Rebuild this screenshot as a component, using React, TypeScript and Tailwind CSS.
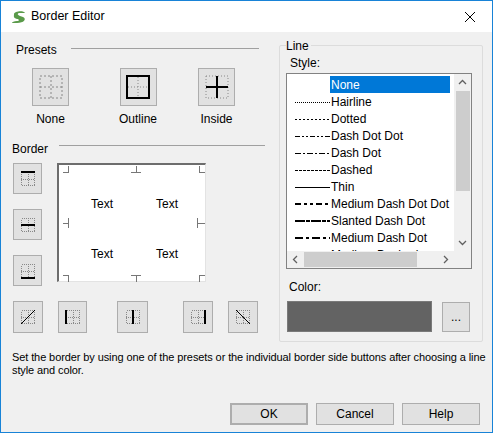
const styles = [
  { label: "None", dash: null as string | null, w: 0 },
  { label: "Hairline", dash: "1 1", w: 1 },
  { label: "Dotted", dash: "2 2", w: 1 },
  { label: "Dash Dot Dot", dash: "5 2 2 2 2 2", w: 1 },
  { label: "Dash Dot", dash: "6 2 2 2", w: 1 },
  { label: "Dashed", dash: "3 1", w: 1 },
  { label: "Thin", dash: "", w: 1 },
  { label: "Medium Dash Dot Dot", dash: "6 3 3 3 3 3", w: 2 },
  { label: "Slanted Dash Dot", dash: "10 1 4 1", w: 2 },
  { label: "Medium Dash Dot", dash: "8 3 3 3", w: 2 },
  { label: "Medium Dashed", dash: "5 3", w: 2 },
]

function Btn({ children, className = "" }: { children?: React.ReactNode; className?: string }) {
  return (
    <div className={"flex items-center justify-center bg-[#e1e1e1] border border-[#adadad] " + className}>
      {children}
    </div>
  )
}

function Grid({ lines }: { lines: string[] }) {
  return (
    <svg width="16" height="16" viewBox="0 0 16 16" shapeRendering="crispEdges">
      <rect x="1.5" y="1.5" width="13" height="13" fill="none" stroke="#888" strokeDasharray="1 1" />
      <line x1="8" y1="1" x2="8" y2="15" stroke="#888" strokeDasharray="1 1" />
      <line x1="1" y1="8" x2="15" y2="8" stroke="#888" strokeDasharray="1 1" />
      {lines.includes("t") && <line x1="1" y1="1" x2="15" y2="1" stroke="#000" strokeWidth="1.2" />}
      {lines.includes("b") && <line x1="1" y1="15" x2="15" y2="15" stroke="#000" strokeWidth="1.2" />}
      {lines.includes("h") && <line x1="1" y1="8" x2="15" y2="8" stroke="#000" strokeWidth="1.2" />}
      {lines.includes("l") && <line x1="1" y1="1" x2="1" y2="15" stroke="#000" strokeWidth="1.2" />}
      {lines.includes("r") && <line x1="15" y1="1" x2="15" y2="15" stroke="#000" strokeWidth="1.2" />}
      {lines.includes("v") && <line x1="8" y1="1" x2="8" y2="15" stroke="#000" strokeWidth="1.2" />}
      {lines.includes("d") && <line x1="1" y1="15" x2="15" y2="1" stroke="#000" strokeWidth="1" shapeRendering="auto" />}
      {lines.includes("u") && <line x1="1" y1="1" x2="15" y2="15" stroke="#000" strokeWidth="1" shapeRendering="auto" />}
    </svg>
  )
}

export default function App() {
  return (
    <div className="w-[493px] h-[433px] border border-[#1883d7] bg-[#f0f0f0] text-[12px] text-black overflow-hidden" style={{ fontFamily: "'Liberation Sans', Arial, sans-serif" }}>
      {/* Title bar */}
      <div className="h-[31px] bg-white flex items-center pl-[10px] pr-[16px]">
        <svg width="16" height="14" viewBox="0 0 16 14">
          <path d="M3 4 C3 1 13 0 14 3 L9 3 C6 3 6 5 9 6 L12 7 C16 9 13 13 6 13 L1 13 C1 12 3 11 6 11 C9 11 8 9 6 9 C2 8 3 6 3 4Z" fill="#5a9a4a" />
        </svg>
        <span className="ml-[4px] text-[12.5px]">Border Editor</span>
        <svg className="ml-auto" width="12" height="12" viewBox="0 0 12 12">
          <path d="M1 1 L11 11 M11 1 L1 11" stroke="#000" strokeWidth="1" />
        </svg>
      </div>

      <div className="flex">
        {/* left column */}
        <div className="w-[270px] pl-[11px]">
          <div className="flex items-center mt-[10px] h-[16px]">
            <span className="ml-[4px]">Presets</span>
            <div className="ml-[14px] flex-1 border-t border-[#a0a0a0] mt-[-4px] mr-[12px]" />
          </div>
          <div className="flex mt-[10px]">
            {[
              { l: "None", x: "ml-[20px]", icon: <svg width="26" height="26" viewBox="0 0 26 26"><rect x="2" y="2" width="22" height="22" fill="none" stroke="#888" strokeDasharray="2 2" /><line x1="13" y1="2" x2="13" y2="24" stroke="#888" strokeDasharray="2 2" /><line x1="2" y1="13" x2="24" y2="13" stroke="#888" strokeDasharray="2 2" /></svg> },
              { l: "Outline", x: "ml-[50px]", icon: <svg width="26" height="26" viewBox="0 0 26 26"><rect x="2" y="2" width="22" height="22" fill="none" stroke="#000" strokeWidth="2" /><line x1="13" y1="3" x2="13" y2="23" stroke="#888" strokeDasharray="1 2" /><line x1="3" y1="13" x2="23" y2="13" stroke="#888" strokeDasharray="1 2" /></svg> },
              { l: "Inside", x: "ml-[41px]", icon: <svg width="26" height="26" viewBox="0 0 26 26"><rect x="2" y="2" width="22" height="22" fill="none" stroke="#888" strokeDasharray="1 2" /><line x1="13" y1="2" x2="13" y2="24" stroke="#000" strokeWidth="2" /><line x1="2" y1="13" x2="24" y2="13" stroke="#000" strokeWidth="2" /></svg> },
            ].map((p) => (
              <div key={p.l} className={"flex flex-col items-center " + p.x}>
                <Btn className="w-[37px] h-[38px]">{p.icon}</Btn>
                <span className="mt-[4px]">{p.l}</span>
              </div>
            ))}
          </div>

          <div className="flex items-center mt-[13px] h-[16px]">
            <span>Border</span>
            <div className="ml-[11px] flex-1 border-t border-[#a0a0a0] mt-[-8px] mr-[6px]" />
          </div>

          <div className="flex mt-[6px]">
            <div className="flex flex-col gap-[15px] ml-[1px]">
              <Btn className="w-[29px] h-[31px]"><Grid lines={["t"]} /></Btn>
              <Btn className="w-[29px] h-[31px]"><Grid lines={["h"]} /></Btn>
              <Btn className="w-[29px] h-[31px]"><Grid lines={["b"]} /></Btn>
            </div>
            <div className="relative ml-[15px] w-[149px] h-[119px] bg-white border-l-2 border-t-2 border-[#6d6d6d] border-r border-b border-r-[#e3e3e3] border-b-[#e3e3e3]">
              <svg className="absolute inset-0" width="147" height="117" shapeRendering="crispEdges">
                <g stroke="#777" fill="none">
                  <path d="M4 7 H9 V1" /><path d="M72 7 H82 M77 7 V1" /><path d="M140 1 V7 H146" />
                  <path d="M4 58 H9 M9 53 V63" /><path d="M138 53 V63 M138 58 H146" />
                  <path d="M4 110 H9 V117" /><path d="M72 110 H82 M77 110 V117" /><path d="M140 117 V110 H146" />
                </g>
              </svg>
              <span className="absolute left-[32px] top-[30px]">Text</span>
              <span className="absolute left-[97px] top-[30px]">Text</span>
              <span className="absolute left-[32px] top-[80px]">Text</span>
              <span className="absolute left-[97px] top-[80px]">Text</span>
            </div>
          </div>

          <div className="flex mt-[15px] ml-[1px]">
            <Btn className="w-[30px] h-[32px]"><Grid lines={["d"]} /></Btn>
            <Btn className="w-[29px] h-[32px] ml-[15px]"><Grid lines={["l"]} /></Btn>
            <Btn className="w-[31px] h-[32px] ml-[30px]"><Grid lines={["v"]} /></Btn>
            <Btn className="w-[30px] h-[32px] ml-[35px]"><Grid lines={["r"]} /></Btn>
            <Btn className="w-[30px] h-[32px] ml-[15px]"><Grid lines={["u"]} /></Btn>
          </div>
        </div>

        {/* Line group */}
        <div className="relative mt-[13px] ml-[8px] w-[204px] h-[297px] border border-[#dcdcdc] rounded-[2px]">
          <span className="absolute left-[6px] top-[-9px] bg-[#f0f0f0] pr-[2px]">Line</span>
          <div className="ml-[10px] mt-[8px]">Style:</div>
          <div className="ml-[6px] mt-[1px] w-[186px] h-[196px] border border-[#828282] bg-white flex flex-col">
            <div className="flex flex-1 overflow-hidden">
              <div className="flex-1 pt-[2px] overflow-hidden">
                {styles.map((s, i) => (
                  <div key={s.label} className="flex items-center h-[17px]">
                    <svg width="43" height="10" className="shrink-0" shapeRendering="crispEdges">
                      {s.dash !== null && (
                        <line x1="8" y1="5" x2="43" y2="5" stroke="#000" strokeWidth={s.w} strokeDasharray={s.dash || undefined} />
                      )}
                    </svg>
                    <span className={"h-[17px] flex items-center pl-[1px] whitespace-nowrap " + (i === 0 ? "bg-[#0078d7] text-white w-[120px]" : "")}>{s.label}</span>
                  </div>
                ))}
              </div>
              <div className="w-[17px] bg-[#f0f0f0] flex flex-col items-center">
                <svg width="17" height="17" viewBox="0 0 17 17"><path d="M5 10 L8.5 6.5 L12 10" stroke="#606060" fill="none" strokeWidth="1.3" /></svg>
                <div className="w-[14px] h-[100px] bg-[#cdcdcd]" />
                <svg className="mt-auto" width="17" height="17" viewBox="0 0 17 17"><path d="M5 7 L8.5 10.5 L12 7" stroke="#606060" fill="none" strokeWidth="1.3" /></svg>
              </div>
            </div>
            <div className="h-[17px] bg-[#f0f0f0] flex items-center">
              <svg width="17" height="17" viewBox="0 0 17 17"><path d="M10 5 L6.5 8.5 L10 12" stroke="#606060" fill="none" strokeWidth="1.3" /></svg>
              <div className="w-[113px] h-[15px] bg-[#cdcdcd]" />
              <svg className="ml-[20px]" width="17" height="17" viewBox="0 0 17 17"><path d="M7 5 L10.5 8.5 L7 12" stroke="#606060" fill="none" strokeWidth="1.3" /></svg>
            </div>
          </div>
          <div className="ml-[9px] mt-[9px]">Color:</div>
          <div className="flex items-center ml-[7px] mt-[5px]">
            <div className="w-[145px] h-[31px] bg-[#636363] border border-[#7a7a7a]" />
            <Btn className="w-[28px] h-[30px] ml-[10px]">...</Btn>
          </div>
        </div>
      </div>

      <p className="ml-[11px] mr-[4px] mt-[9px] leading-[13px] text-[11px] tracking-[-0.1px]">
        Set the border by using one of the presets or the individual border side buttons after choosing a line style and color.
      </p>

      <div className="flex justify-end gap-[8px] mr-[12px] mt-[26px]">
        <Btn className="w-[78px] h-[22px] border-2 border-[#0078d7]">OK</Btn>
        <Btn className="w-[78px] h-[22px]">Cancel</Btn>
        <Btn className="w-[78px] h-[22px]">Help</Btn>
      </div>
    </div>
  )
}
